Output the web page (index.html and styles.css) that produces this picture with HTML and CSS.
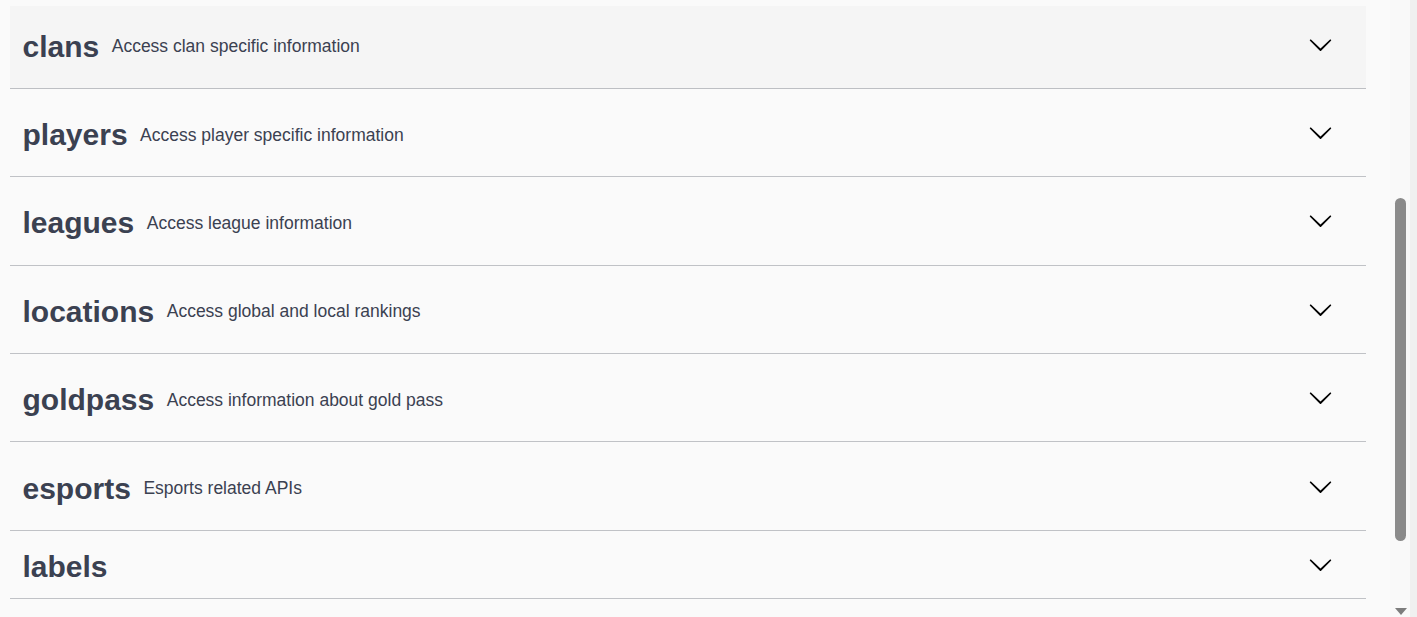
FILE: index.html
```html
<!DOCTYPE html>
<html lang="en">
<head>
<meta charset="utf-8">
<title>API tags</title>
<link rel="stylesheet" href="styles.css">
</head>
<body>
<main class="tags">
  <section class="tag-section">
    <h3 class="tag tag-hover tag-desc"><span class="tag-name">clans</span><small class="tag-text">Access clan specific information</small><svg class="arrow" viewBox="0 0 20 20"><path d="M17.418 6.109c.272-.268.709-.268.979 0s.271.701 0 .969l-7.908 7.830c-.27.268-.707.268-.979 0l-7.908-7.830c-.27-.268-.27-.701 0-.969.271-.268.709-.268.979 0L10 13.25l7.418-7.141z"/></svg></h3>
  </section>
  <section class="tag-section">
    <h3 class="tag tag-desc"><span class="tag-name">players</span><small class="tag-text">Access player specific information</small><svg class="arrow" viewBox="0 0 20 20"><path d="M17.418 6.109c.272-.268.709-.268.979 0s.271.701 0 .969l-7.908 7.830c-.27.268-.707.268-.979 0l-7.908-7.830c-.27-.268-.27-.701 0-.969.271-.268.709-.268.979 0L10 13.25l7.418-7.141z"/></svg></h3>
  </section>
  <section class="tag-section">
    <h3 class="tag tag-desc"><span class="tag-name">leagues</span><small class="tag-text">Access league information</small><svg class="arrow" viewBox="0 0 20 20"><path d="M17.418 6.109c.272-.268.709-.268.979 0s.271.701 0 .969l-7.908 7.830c-.27.268-.707.268-.979 0l-7.908-7.830c-.27-.268-.27-.701 0-.969.271-.268.709-.268.979 0L10 13.25l7.418-7.141z"/></svg></h3>
  </section>
  <section class="tag-section">
    <h3 class="tag tag-desc"><span class="tag-name">locations</span><small class="tag-text">Access global and local rankings</small><svg class="arrow" viewBox="0 0 20 20"><path d="M17.418 6.109c.272-.268.709-.268.979 0s.271.701 0 .969l-7.908 7.830c-.27.268-.707.268-.979 0l-7.908-7.830c-.27-.268-.27-.701 0-.969.271-.268.709-.268.979 0L10 13.25l7.418-7.141z"/></svg></h3>
  </section>
  <section class="tag-section">
    <h3 class="tag tag-desc"><span class="tag-name">goldpass</span><small class="tag-text">Access information about gold pass</small><svg class="arrow" viewBox="0 0 20 20"><path d="M17.418 6.109c.272-.268.709-.268.979 0s.271.701 0 .969l-7.908 7.830c-.27.268-.707.268-.979 0l-7.908-7.830c-.27-.268-.27-.701 0-.969.271-.268.709-.268.979 0L10 13.25l7.418-7.141z"/></svg></h3>
  </section>
  <section class="tag-section">
    <h3 class="tag tag-desc"><span class="tag-name">esports</span><small class="tag-text">Esports related APIs</small><svg class="arrow" viewBox="0 0 20 20"><path d="M17.418 6.109c.272-.268.709-.268.979 0s.271.701 0 .969l-7.908 7.830c-.27.268-.707.268-.979 0l-7.908-7.830c-.27-.268-.27-.701 0-.969.271-.268.709-.268.979 0L10 13.25l7.418-7.141z"/></svg></h3>
  </section>
  <section class="tag-section">
    <h3 class="tag tag-plain"><span class="tag-name">labels</span><small class="tag-text"></small><svg class="arrow" viewBox="0 0 20 20"><path d="M17.418 6.109c.272-.268.709-.268.979 0s.271.701 0 .969l-7.908 7.830c-.27.268-.707.268-.979 0l-7.908-7.830c-.27-.268-.27-.701 0-.969.271-.268.709-.268.979 0L10 13.25l7.418-7.141z"/></svg></h3>
  </section>
</main>
<aside class="scrollbar">
  <div class="scroll-track">
    <div class="scroll-thumb"></div>
    <div class="scroll-arrow"></div>
  </div>
  <div class="scroll-edge"></div>
</aside>
</body>
</html>
```

FILE: styles.css
```css
html, body {
  margin: 0;
  padding: 0;
}

body {
  background: #fafafa;
  height: 617px;
  overflow: hidden;
  display: flex;
  font-family: "Liberation Sans", Arial, sans-serif;
  color: #3b4151;
}

.tags {
  flex: 1;
  padding: 5.6px 24px 0 10px;
}

.tag-section {
  margin-bottom: 5.2px;
}

.tag {
  box-sizing: border-box;
  margin: 0;
  display: flex;
  align-items: center;
  border-bottom: 1px solid rgba(59, 65, 81, 0.3);
  padding: 0 32.6px 0 12.5px;
  font-size: 30px;
  font-weight: 700;
  cursor: pointer;
}

.tag-desc {
  height: 83.2px;
}

.tag-plain {
  height: 63.5px;
}

.tag-hover {
  background: rgba(0, 0, 0, 0.02);
}

.tag-name {
  white-space: nowrap;
}

.tag-text {
  flex: 1;
  font-size: 17.5px;
  font-weight: 400;
  padding: 0 12.5px;
}

.arrow {
  width: 25px;
  height: 25px;
  fill: #000;
  flex: none;
  margin-bottom: 5px;
}

.scrollbar {
  width: 27px;
  flex: none;
  display: flex;
}

.scroll-track {
  width: 20px;
  background: #f9f9f9;
  display: flex;
  flex-direction: column;
  align-items: center;
  padding-top: 198px;
  padding-bottom: 2px;
  box-sizing: border-box;
}

.scroll-thumb {
  width: 11px;
  height: 343px;
  border-radius: 6px;
  background: #8b8b8b;
  margin-left: 1px;
}

.scroll-arrow {
  margin-top: auto;
  margin-left: 1px;
  width: 0;
  height: 0;
  border-left: 6px solid transparent;
  border-right: 6px solid transparent;
  border-top: 7px solid #7d7d7d;
}

.scroll-edge {
  flex: 1;
  background: #f0f0f0;
}
```
